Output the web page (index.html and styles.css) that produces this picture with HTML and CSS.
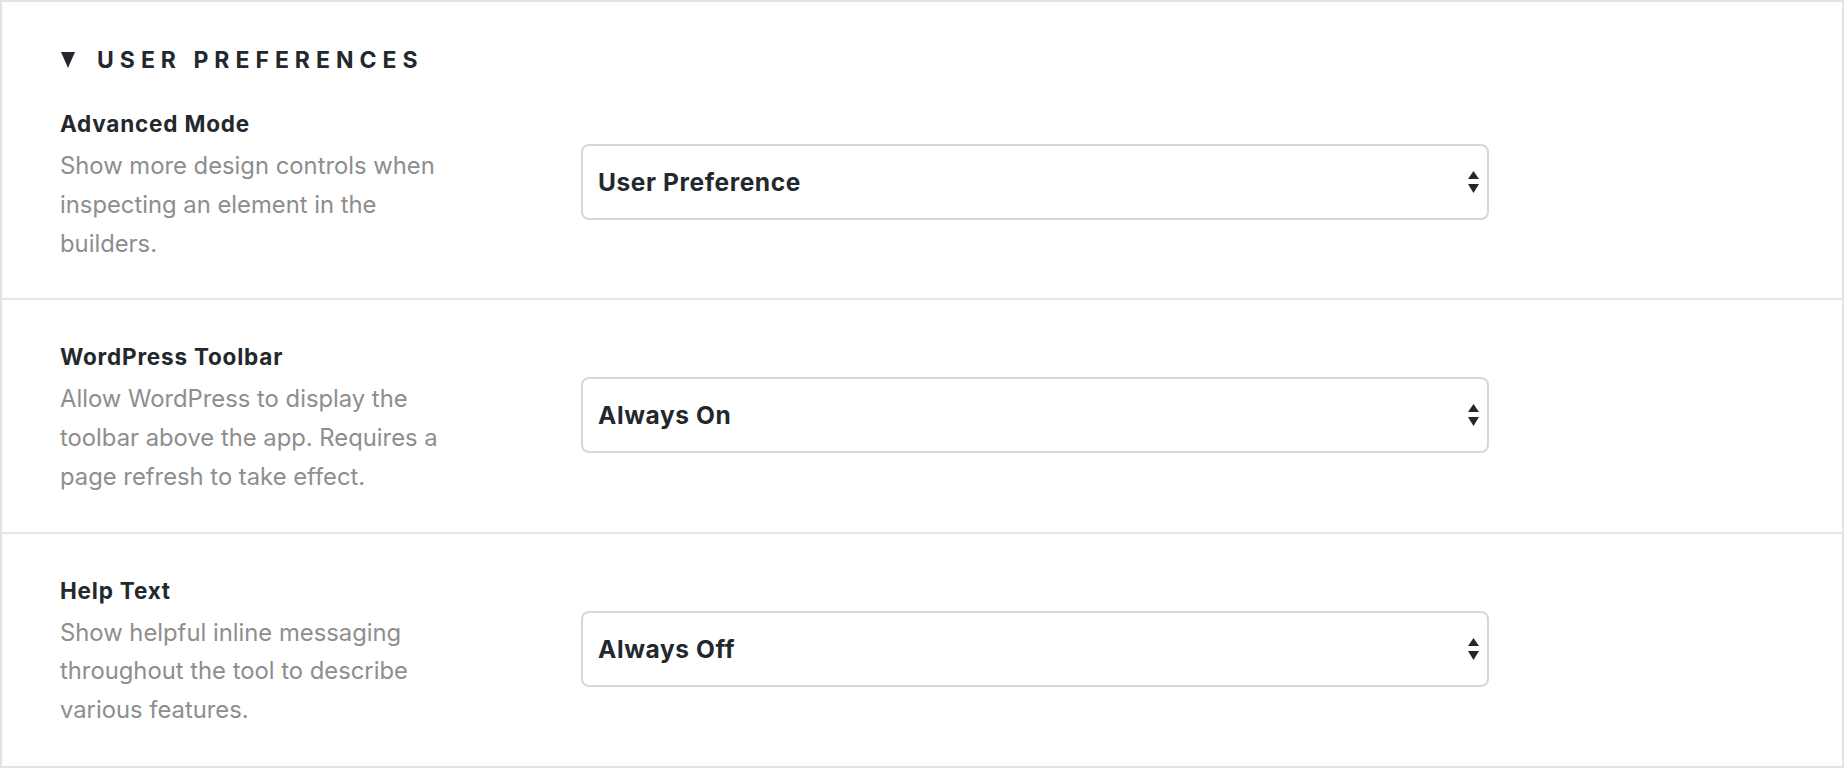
FILE: index.html
```html
<!DOCTYPE html>
<html lang="en">
<head>
<meta charset="utf-8">
<title>User Preferences</title>
<link rel="stylesheet" href="styles.css">
</head>
<body>
<div class="panel">
  <div class="heading">
    <svg class="heading-caret" width="14" height="16" viewBox="0 0 14 16" aria-hidden="true"><polygon points="0,0 14,0 7,16" fill="#23282d"/></svg>
    <span class="heading-text">User Preferences</span>
  </div>

  <div class="row row-first">
    <div class="info">
      <div class="label">Advanced Mode</div>
      <div class="desc">Show more design controls when inspecting an element in the builders.</div>
    </div>
    <div class="select">
      <span class="select-value">User Preference</span>
      <svg class="select-arrows" width="11" height="22" viewBox="0 0 11 22" aria-hidden="true"><polygon points="0,8 5.5,0 11,8" fill="#23282d"/><polygon points="0,13 11,13 5.5,22" fill="#23282d"/></svg>
    </div>
  </div>

  <div class="row">
    <div class="info">
      <div class="label">WordPress Toolbar</div>
      <div class="desc">Allow WordPress to display the toolbar above the app. Requires a page refresh to take effect.</div>
    </div>
    <div class="select">
      <span class="select-value">Always On</span>
      <svg class="select-arrows" width="11" height="22" viewBox="0 0 11 22" aria-hidden="true"><polygon points="0,8 5.5,0 11,8" fill="#23282d"/><polygon points="0,13 11,13 5.5,22" fill="#23282d"/></svg>
    </div>
  </div>

  <div class="row row-last">
    <div class="info">
      <div class="label">Help Text</div>
      <div class="desc">Show helpful inline messaging throughout the tool to describe various features.</div>
    </div>
    <div class="select">
      <span class="select-value">Always Off</span>
      <svg class="select-arrows" width="11" height="22" viewBox="0 0 11 22" aria-hidden="true"><polygon points="0,8 5.5,0 11,8" fill="#23282d"/><polygon points="0,13 11,13 5.5,22" fill="#23282d"/></svg>
    </div>
  </div>
</div>
</body>
</html>
```

FILE: styles.css
```css
html, body {
  margin: 0;
  padding: 0;
  background: #ffffff;
}

body {
  font-family: Inter, "Noto Sans", "Liberation Sans", sans-serif;
  color: #23282d;
}

.panel {
  box-sizing: border-box;
  width: 1844px;
  height: 768px;
  border: 2px solid #e3e3e3;
  display: flex;
  flex-direction: column;
}

.heading {
  display: flex;
  align-items: center;
  padding: 44px 0 0 59px;
  height: 28px;
  margin-bottom: 35px;
}

.heading-caret {
  display: block;
  margin-right: 22px;
}

.heading-text {
  font-size: 23px;
  line-height: 28px;
  font-weight: 700;
  letter-spacing: 6px;
  text-transform: uppercase;
}

.row {
  display: grid;
  grid-template-columns: 521px 908px;
  align-items: start;
  padding: 42px 0 35px 58px;
  border-top: 2px solid #e6e6e6;
}

.row-first {
  padding-top: 0;
  border-top: none;
}

.row-last {
  flex: 1;
}

.info {
  max-width: 395px;
}

.label {
  font-size: 22.5px;
  line-height: 30px;
  font-weight: 700;
  letter-spacing: 0.8px;
  margin-bottom: 8px;
}

.desc {
  font-size: 23.8px;
  line-height: 38.75px;
  color: #8e8e8e;
}

.select {
  box-sizing: border-box;
  margin-top: 35px;
  height: 76px;
  border: 2px solid #d7d7d7;
  border-radius: 8px;
  display: flex;
  align-items: center;
  justify-content: space-between;
  padding: 0 8px 0 15px;
  background: #ffffff;
}

.select-value {
  font-size: 24.5px;
  line-height: 30px;
  font-weight: 700;
  letter-spacing: 0.6px;
}

.select-arrows {
  display: block;
}
```
